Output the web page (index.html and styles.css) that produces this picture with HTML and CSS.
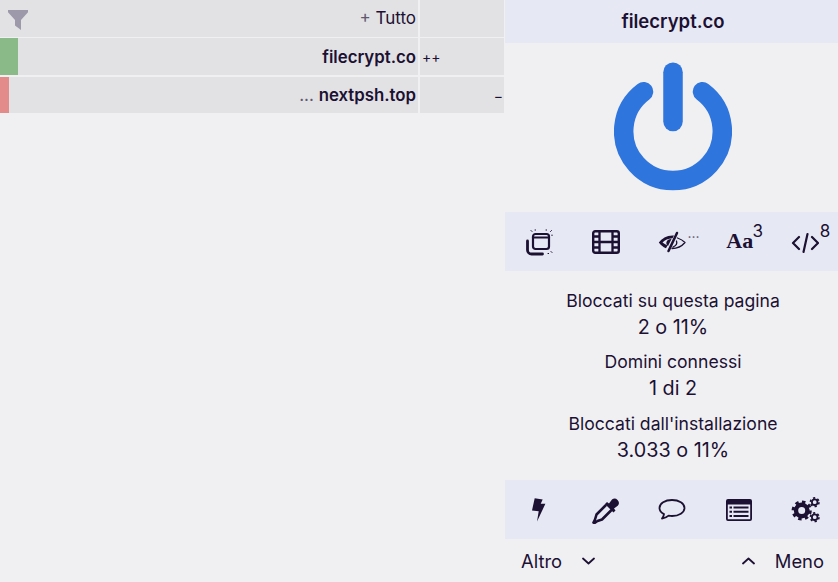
FILE: index.html
```html
<!DOCTYPE html>
<html lang="it">
<head>
  <meta charset="UTF-8" />
  <meta name="viewport" content="width=device-width, initial-scale=1.0" />
  <title>uBlock Origin</title>
  <link rel="stylesheet" href="styles.css">
</head>
<body>
  <div class="popup">
    <div class="firewall">
      <div class="row">
        <div class="cell-name">
          <svg class="filter-icon" viewBox="0 0 20 20"><path d="M0 0h20v2.200l-7 7.800v10l-6-4.500V10L0 2.200z"/></svg>
          <span class="name"><span class="dim">+</span> Tutto</span>
        </div>
        <div class="cell-count"></div>
      </div>
      <div class="row">
        <div class="cell-name">
          <span class="bar bar-ok"></span>
          <span class="name"><b>filecrypt.co</b></span>
        </div>
        <div class="cell-count left">++</div>
      </div>
      <div class="row">
        <div class="cell-name">
          <span class="bar bar-blocked"></span>
          <span class="name"><span class="dim">...</span> <b>nextpsh.top</b></span>
        </div>
        <div class="cell-count right">&minus;</div>
      </div>
    </div>

    <div class="panel">
      <div class="title">filecrypt.co</div>

      <div class="power">
        <svg viewBox="0 0 118 138" width="118" height="138">
          <path class="power-ring" d="M29.500 38.700a49.300 49.300 0 1 0 59 0"/>
          <path class="power-ring" d="M59 19.250v49.250"/>
        </svg>
      </div>

      <div class="tools">
        <span class="tool">
          <svg viewBox="1 0 28 28" width="28" height="28" class="ico">
            <rect x="8" y="6" width="16" height="15" rx="2.500" stroke-width="2.200"/>
            <path d="M8 9.500h16" stroke-width="2.200"/>
            <path d="M2.500 13v9a4 4 0 0 0 4 4h11" stroke-width="2.800"/>
            <path d="M6 2.500l1 1M10 2h.6M21 2h.6M26.500 2.500l-1 1M27 7v.6M26 23.500l1 1M23 25.500h.6" stroke-width="1"/>
          </svg>
        </span>
        <span class="tool">
          <svg viewBox="0 0 28 24" width="28" height="24" class="ico">
            <rect x="1.200" y="1.200" width="25.600" height="21.600" rx="2" stroke-width="2.400"/>
            <path d="M7.500 1v22M20.500 1v22M7.500 12h13M1 6.500h6.500M1 12h6.500M1 17.500h6.500M20.500 6.500H27M20.500 12H27M20.500 17.500H27" stroke-width="2.300"/>
          </svg>
        </span>
        <span class="tool">
          <svg viewBox="0 0 28 24" width="28" height="24" class="ico">
            <path class="solid" d="M16 5.500C9 5 4 8.500.8 12.500 2.500 15 5 17 8 18.300l1.500-2.800C7.500 14.500 5.800 13.500 4.500 12.500 7 10 10 8.500 14.500 8.200z"/>
            <path class="solid" d="M13.500 9 10 16C8.500 15 8 13.500 8.500 12 9 10 11.500 8.800 13.500 9z"/>
            <path d="M19 3 10.500 21" stroke-width="2.500"/>
            <path d="M19.500 8C22.500 9 25 10.500 27 12.500 24 16 19 18.500 14 18.500M18.500 11c1 3-1 5-3.500 6" stroke-width="1.300"/>
          </svg>
          <sup class="badge badge-dots">...</sup>
        </span>
        <span class="tool">
          <span class="font-aa">Aa</span>
          <sup class="badge badge-aa">3</sup>
        </span>
        <span class="tool">
          <svg viewBox="0 0 28 24" width="28" height="24" class="ico">
            <path d="M8 7 2 13l6 6M21 7l6 6-6 6M16.500 4 12.500 22" stroke-width="2.200"/>
          </svg>
          <sup class="badge badge-code">8</sup>
        </span>
      </div>

      <div class="stats">
        <div class="stat-label">Bloccati su questa pagina</div>
        <div class="stat-value">2 o 11%</div>
        <div class="stat-label">Domini connessi</div>
        <div class="stat-value">1 di 2</div>
        <div class="stat-label">Bloccati dall'installazione</div>
        <div class="stat-value">3.033 o 11%</div>
      </div>

      <div class="tools">
        <span class="tool">
          <svg viewBox="0 0 28 28" width="28" height="28"><path class="solid" d="M8.700 2.200 16.700 3.500 14.700 7.800H19.400L11 25.500 12.700 15.200 6 14.500z"/></svg>
        </span>
        <span class="tool">
          <svg viewBox="0 0 28 28" width="28" height="28">
            <path class="solid" d="M17 7.500 20 3.500a4.300 4.300 0 0 1 6 6l-4 3 1.500 2-2 2-8.500-8.500 2-2z"/>
            <path d="M13.500 9.500 4.500 18.500 3 23.500 1.500 26.500 2.500 27 5.500 25 10 23.500 19 14.500" class="ico-line" stroke-width="2.600"/>
          </svg>
        </span>
        <span class="tool">
          <svg viewBox="0 0 28 24" width="28" height="24" class="ico">
            <path d="M14 2C7 2 1.500 5.500 1.500 10c0 2.500 1.800 4.700 4.500 6.100-.2 1.500-.9 3-2 4.400 2.500-.3 5-1.500 6.600-2.900 1.100.2 2.200.4 3.400.4 7 0 12.500-3.500 12.500-8S21 2 14 2z" stroke-width="1.800"/>
          </svg>
        </span>
        <span class="tool">
          <svg viewBox="0 0 26 24" width="26" height="24">
            <path class="solid" fill-rule="evenodd" d="M2 1h22a2 2 0 0 1 2 2v18a2 2 0 0 1-2 2H2a2 2 0 0 1-2-2V3a2 2 0 0 1 2-2zM1.800 6.500v14.700h22.400V6.500zM3.500 8.500h2.500v2H3.500zm4 0H22.500v2H7.500zM3.500 12.800h2.500v2H3.500zm4 0H22.500v2H7.500zM3.500 17h2.500v2H3.500zm4 0H22.500v2H7.500z"/>
          </svg>
        </span>
        <span class="tool">
          <svg viewBox="-1 0 31 28" width="31" height="28">
            <circle class="cog" cx="11.700" cy="14.500" r="5.700" stroke-width="4.400"/>
            <circle class="cog" cx="11.700" cy="14.500" r="8.600" stroke-width="3" stroke-dasharray="3.400 3.355"/>
            <circle class="cog" cx="24.700" cy="6.200" r="2.800" stroke-width="1.800"/>
            <circle class="cog" cx="24.700" cy="6.200" r="4.300" stroke-width="1.600" stroke-dasharray="2.250 2.250"/>
            <circle class="cog" cx="24.700" cy="21.200" r="2.800" stroke-width="1.800"/>
            <circle class="cog" cx="24.700" cy="21.200" r="4.300" stroke-width="1.600" stroke-dasharray="2.250 2.250"/>
          </svg>
        </span>
      </div>

      <div class="more-less">
        <span class="toggle">Altro
          <svg viewBox="0 0 13 8" width="13" height="8" class="ico"><path d="M1 1.500 6.500 6.500 12 1.500" stroke-width="1.800"/></svg>
        </span>
        <span class="toggle">
          <svg viewBox="0 0 13 8" width="13" height="8" class="ico"><path d="M1 6.500 6.500 1.500 12 6.500" stroke-width="1.800"/></svg>
          Meno
        </span>
      </div>
    </div>
  </div>
</body>
</html>
```

FILE: styles.css
```css
* {
  box-sizing: border-box;
}
body {
  margin: 0;
  background-color: #f0f0f3;
  color: #1c1033;
  font-family: Inter, "Noto Sans", sans-serif;
  font-size: 17px;
}
.popup {
  display: flex;
  height: 582px;
  overflow: hidden;
}
.firewall {
  width: 505px;
  padding-right: 1px;
}
.row {
  display: flex;
  height: 37px;
  margin-bottom: 1px;
  background: #e2e2e4;
}
.row:first-child .name {
  padding-bottom: 2px;
}
.row:nth-child(2) {
  margin-bottom: 2px;
}
.row:nth-child(3) {
  height: 36px;
}
.cell-name {
  display: flex;
  align-items: center;
  justify-content: space-between;
  width: 418px;
}
.cell-count {
  display: flex;
  align-items: center;
  flex: 1;
  margin-left: 2px;
  box-shadow: -2px 0 0 #f0f0f3;
  font-size: 14px;
}
.cell-count.left {
  padding-left: 2px;
}
.cell-count.right {
  justify-content: flex-end;
  padding-right: 1px;
}
.filter-icon {
  width: 20px;
  height: 20px;
  margin: 3px 0 0 8px;
  fill: #9d99ab;
}
.bar {
  align-self: stretch;
}
.bar-ok {
  width: 18px;
  background: #8aba87;
}
.bar-blocked {
  width: 9px;
  background: #e38a8a;
}
.name {
  padding-right: 2px;
}
.name b {
  font-size: 16.800px;
  font-weight: 600;
}
.dim {
  color: #5f5870;
}
.panel {
  display: flex;
  flex-direction: column;
  flex: 1;
}
.title {
  height: 43px;
  padding-left: 3px;
  background: #e6e9f3;
  line-height: 43px;
  text-align: center;
  font-size: 18.500px;
  font-weight: 600;
}
.power {
  display: flex;
  justify-content: center;
  height: 169px;
  padding: 10px 0 0 3px;
}
.power-ring {
  fill: none;
  stroke: #2e75dd;
  stroke-width: 19.500;
  stroke-linecap: round;
}
.tools {
  display: grid;
  grid-template-columns: repeat(5, 1fr);
  height: 59px;
  padding-left: 2px;
  background: #e6e9f3;
}
.tool {
  position: relative;
  display: flex;
  align-items: center;
  justify-content: center;
}
.ico path, .ico rect, .ico-line {
  fill: none;
  stroke: #1c1033;
  stroke-linecap: round;
  stroke-linejoin: round;
}
.ico .solid, .solid {
  fill: #1c1033;
  stroke: none;
}
.cog {
  fill: none;
  stroke: #1c1033;
}
.font-aa {
  margin: -2px 0 0 2px;
  font-family: "Liberation Serif", serif;
  font-size: 22px;
  font-weight: 700;
}
.badge {
  position: absolute;
  top: 11px;
  font-size: 17px;
  line-height: 1;
}
.badge-dots {
  top: 14px;
  left: 48px;
  font-size: 14px;
  color: #5f5870;
}
.badge-aa {
  left: 47px;
}
.badge-code {
  left: 48px;
}
.stats {
  height: 209px;
  padding: 17.600px 0 0 3px;
  text-align: center;
}
.stat-label {
  font-size: 17.600px;
  line-height: 23px;
}
.stat-value {
  margin-bottom: 8.500px;
  font-size: 19.800px;
  line-height: 30px;
}
.more-less {
  display: flex;
  align-items: center;
  justify-content: space-between;
  flex: 1;
  padding: 1px 14px 0 16px;
  font-size: 18.400px;
}
.toggle {
  display: flex;
  align-items: center;
  gap: 20px;
}
```
